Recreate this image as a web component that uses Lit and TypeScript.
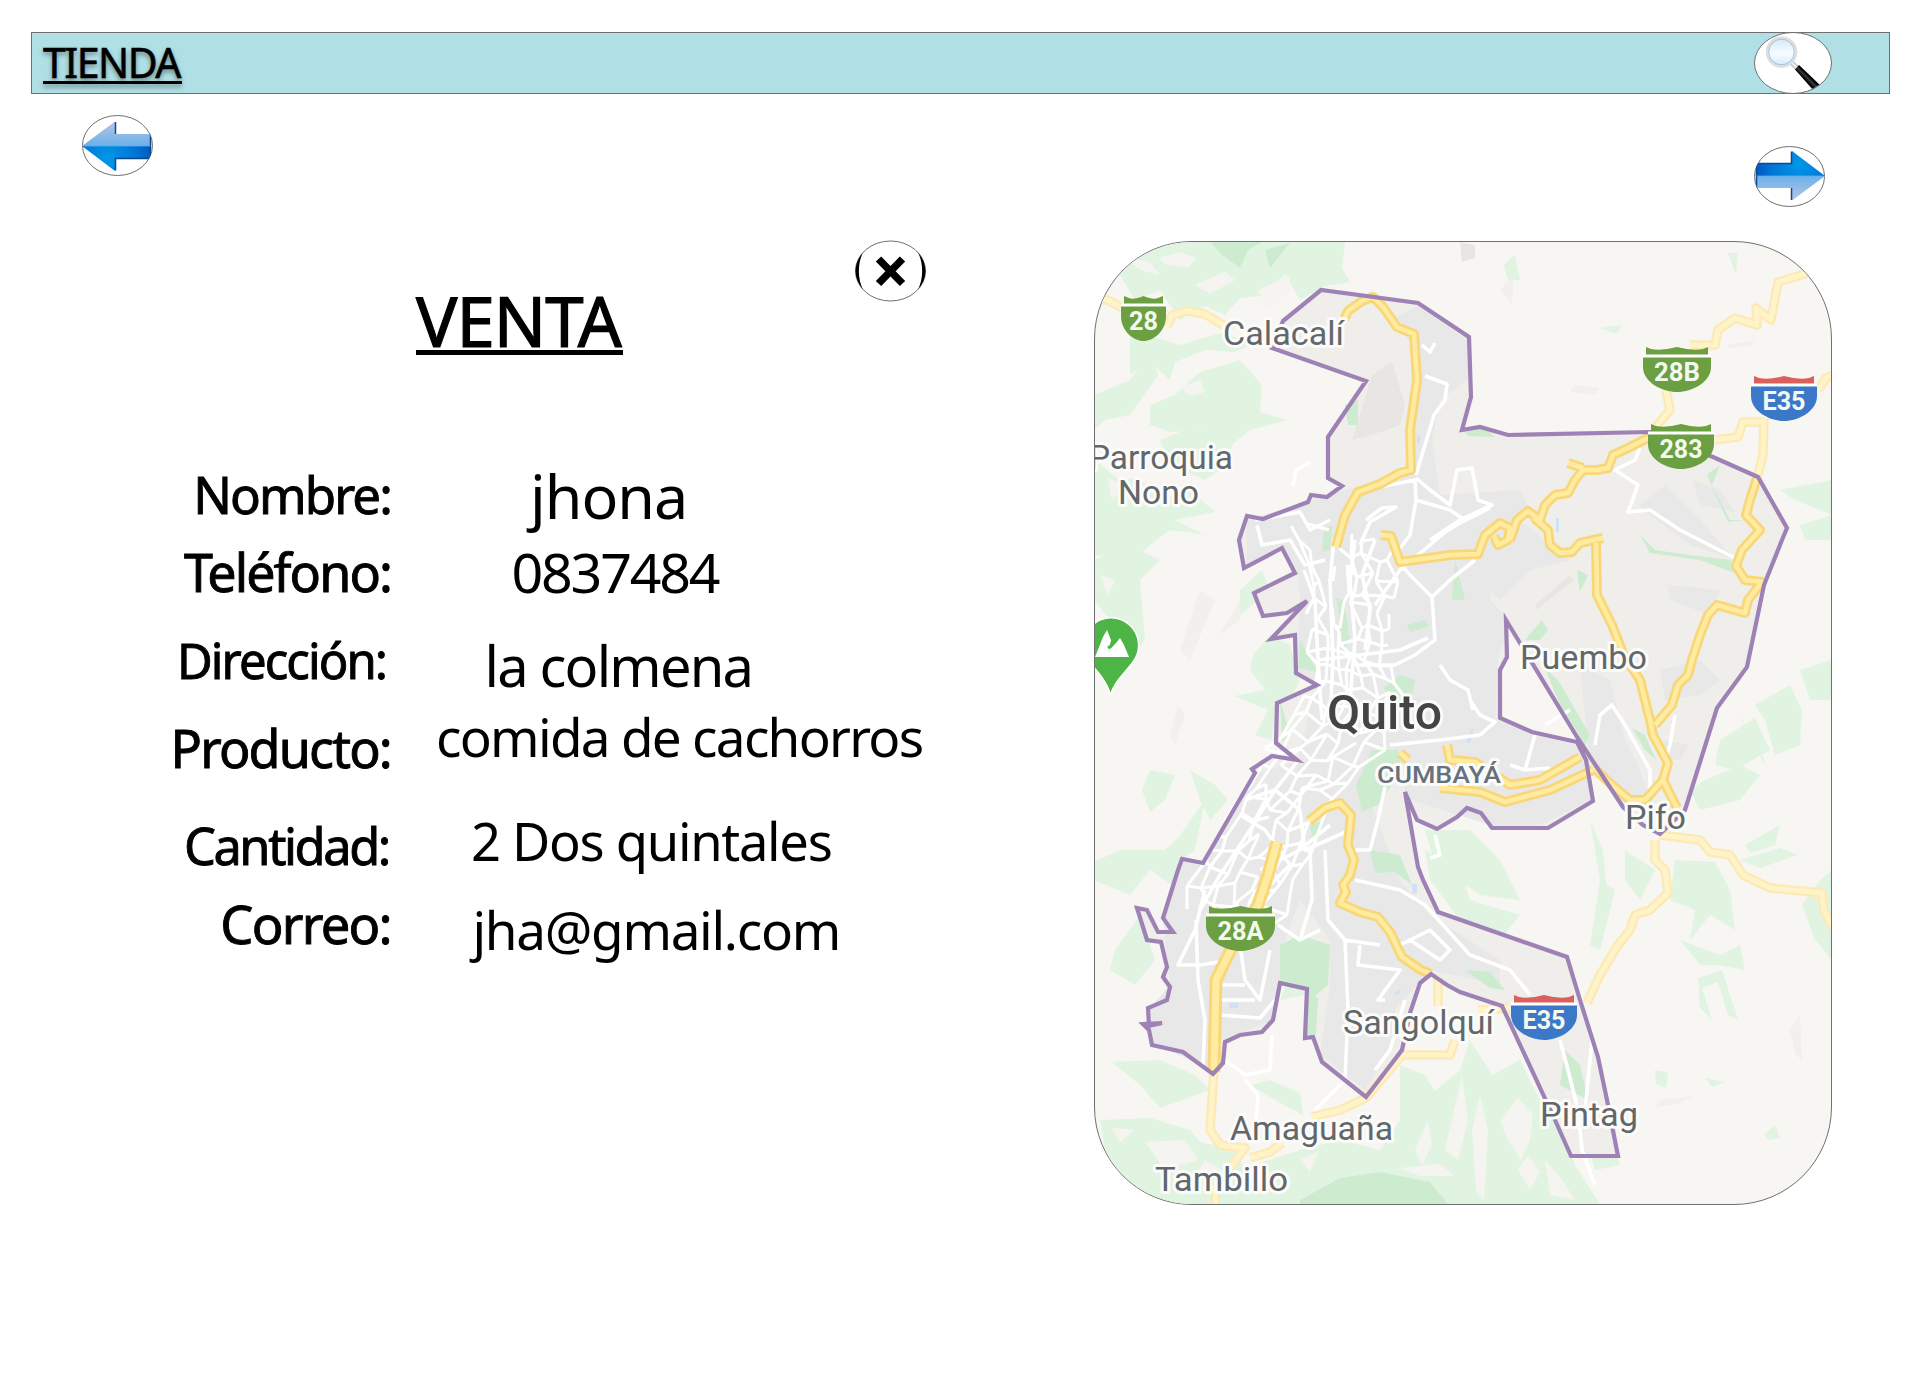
import { LitElement, html, svg, css } from "lit";
import { customElement } from "lit/decorators.js";

const BOUNDARY =
  "M1283 321 1321 290 1418 303 1469 337 1471 397 1462 430 1480 427 1508 435 1650 432 1713 457 1758 477 1787 528 1782 540 1764 585 1747 667 1717 708 1685 810 1660 834 1643 825 1623 807 1577 737 1506 620 1507 657 1500 670 1500 718 1532 732 1577 742 1586 760 1593 801 1548 828 1492 828 1481 813 1467 808 1457 817 1437 829 1417 820 1405 792 1418 867 1423 880 1438 912 1567 957 1580 1000 1598 1057 1607 1100 1618 1156 1571 1156 1555 1120 1502 1006 1460 992 1447 985 1431 974 1420 983 1410 1013 1402 1050 1366 1097 1322 1062 1313 1037 1305 1038 1307 989 1280 983 1273 1020 1262 1032 1240 1035 1225 1042 1223 1063 1213 1074 1183 1052 1152 1045 1149 1030 1143 1024 1162 1023 1149 1026 1148 1008 1167 1000 1170 987 1163 977 1167 967 1161 942 1147 940 1137 908 1147 910 1158 932 1173 932 1163 918 1178 870 1182 859 1203 863 1255 773 1252 769 1272 756 1297 760 1276 743 1277 703 1317 685 1296 673 1295 635 1271 639 1307 601 1287 613 1263 616 1254 593 1295 573 1282 548 1244 568 1239 540 1247 516 1263 519 1308 502 1311 495 1327 497 1342 486 1328 478 1328 437 1366 381 1272 348Z";

const GREEN_LIGHT = [
  "1094 242 1345 242 1342 268 1350 282 1325 286 1300 300 1285 275 1260 296 1240 298 1225 315 1205 306 1180 320 1160 290 1135 300 1120 275 1094 300",
  "1130 330 1180 345 1225 332 1250 345 1235 352 1205 350 1175 362 1170 380 1150 362 1130 375",
  "1094 395 1130 380 1150 352 1158 375 1130 415 1105 420 1094 430",
  "1150 405 1175 395 1200 372 1240 360 1262 385 1260 412 1288 420 1250 430 1225 450 1200 430 1170 432 1150 425",
  "1094 460 1120 480 1140 478 1160 500 1190 490 1215 512 1175 520 1205 535 1216 536 1170 530 1150 545 1135 560 1094 555",
  "1094 560 1130 545 1160 560 1140 580 1145 640 1130 660 1110 620 1094 600",
  "1160 440 1190 428 1235 440 1220 470 1205 480 1170 465",
  "1094 862 1120 850 1165 850 1178 838 1205 800 1195 850 1178 862 1172 885 1150 870 1130 895 1094 880",
  "1150 770 1175 775 1165 800 1150 812 1142 790",
  "1190 770 1215 785 1228 800 1210 820 1200 800",
  "1115 950 1140 915 1155 960 1135 985 1110 970",
  "1112 1062 1160 1060 1195 1075 1210 1090 1160 1108 1140 1085",
  "1100 1120 1150 1118 1190 1130 1200 1142 1235 1150 1245 1168 1300 1150 1340 1140 1380 1150 1400 1120 1460 1070 1470 1040 1492 1075 1520 1060 1540 1100 1560 1125 1575 1165 1600 1204 1130 1204 1105 1150",
  "1250 1085 1270 1080 1300 1093 1303 1115 1280 1103",
  "1400 1065 1425 1075 1440 1100 1430 1130 1400 1130",
  "1280 1000 1305 995 1303 1035 1318 1045 1312 1010 1305 975 1290 975",
  "1253 655 1270 635 1290 645 1300 680 1290 700 1276 706 1272 740 1255 735 1268 710 1235 696 1265 690 1250 670",
  "1240 590 1262 570 1270 590 1240 615",
  "1425 850 1460 870 1470 900 1520 915 1500 940 1460 920 1430 880",
  "1425 830 1470 830 1500 860 1520 900 1480 895 1435 865",
  "1705 780 1740 765 1760 775 1740 800 1700 810 1690 790",
  "1755 705 1790 685 1802 710 1800 745 1775 755 1765 720",
  "1720 740 1755 718 1770 750 1735 770 1715 765",
  "1800 670 1832 660 1832 700 1810 700",
  "1740 860 1780 848 1798 855 1760 868",
  "1745 845 1780 825 1775 845 1750 853",
  "1625 850 1655 870 1640 900 1625 880",
  "1675 860 1715 862 1730 890 1735 930 1710 915 1690 940 1695 910 1670 900",
  "1680 940 1720 955 1740 945 1745 970 1720 965 1700 965",
  "1802 905 1820 880 1832 870 1832 960 1815 940",
  "1600 880 1615 890 1600 950 1590 945",
  "1780 490 1832 480 1832 515 1795 500",
  "1800 525 1832 515 1832 540 1805 540",
  "1504 265 1515 255 1520 280 1508 280",
  "1600 328 1622 325 1616 334",
  "1728 253 1738 253 1736 275",
  "1580 1120 1610 1125 1620 1165 1595 1170",
  "1655 1070 1668 1072 1666 1088 1656 1084",
  "1764 1135 1775 1125 1780 1138 1768 1140",
  "1705 1078 1724 1082 1712 1087",
  "1698 978 1722 970 1738 1020 1728 1015 1718 982 1702 988 1712 1020 1700 1008",
  "1590 820 1603 850 1608 900 1600 880",
  "1740 715 1762 755 1768 770 1750 740",
];

/** Bare hillsides that break up the wooded areas. */
const CLEARINGS = [
  "1158 258 1180 252 1196 258 1188 268 1165 264",
  "1125 258 1150 262 1160 275 1140 270",
  "1195 285 1225 272 1235 280 1210 294",
  "1258 290 1290 275 1290 292 1268 310",
  "1112 1128 1135 1130 1120 1142",
  "1145 1142 1185 1140 1198 1160 1165 1170",
  "1205 1160 1225 1172 1195 1176",
  "1300 1160 1318 1152 1310 1172",
  "1415 1150 1428 1120 1432 1145 1422 1165",
  "1445 1150 1462 1075 1468 1120 1458 1160",
  "1400 1168 1440 1164 1455 1176 1420 1176",
  "1472 1130 1480 1095 1488 1130 1484 1200 1476 1190",
  "1500 1120 1518 1098 1533 1115 1530 1140 1521 1160 1508 1140",
  "1518 1170 1528 1155 1540 1172 1530 1190",
  "1545 1160 1562 1180 1575 1200 1550 1195",
  "1180 388 1200 380 1205 392 1192 396",
  "1108 478 1125 486 1112 500",
  "1100 575 1115 580 1108 596",
];

const GREEN_MID = [
  "1210 242 1262 242 1248 250 1240 268 1222 255",
  "1265 250 1290 243 1270 268",
  "1280 700 1290 735 1282 742",
  "1384 688 1400 675 1415 680 1412 695 1390 702",
  "1356 785 1372 750 1398 750 1402 770 1378 805 1362 812",
  "1336 598 1344 600 1350 640 1344 650",
  "1300 640 1318 672 1298 668",
  "1280 945 1300 935 1330 945 1328 985 1310 1000 1305 988 1280 982",
  "1306 990 1318 998 1316 1035 1306 1035",
  "1300 1200 1340 1178 1380 1172 1430 1182 1448 1204 1300 1204",
  "1407 625 1425 620 1430 626 1410 632",
  "1345 405 1358 400 1358 425 1348 425",
  "1525 640 1542 620 1548 630 1540 640",
  "1545 668 1558 680 1590 735 1585 745 1560 705",
  "1577 570 1588 575 1580 592",
  "1632 728 1645 735 1656 760 1645 750",
  "1707 475 1720 465 1712 485 1730 520 1745 520 1728 522",
  "1640 535 1655 550 1690 555 1730 560 1740 575 1700 560 1650 553",
  "1465 970 1490 972 1505 990 1490 988",
  "1565 1050 1580 1065 1588 1100 1560 1085",
  "1310 825 1325 820 1320 835 1312 837",
  "1370 850 1400 855 1412 885 1395 872 1375 873",
  "1455 560 1465 600 1452 600",
  "1324 530 1332 525 1330 550 1322 552",
  "1462 428 1480 425 1495 437 1468 436",
];

const SHADE = [
  "1372 375 1392 362 1405 405 1400 425 1372 435 1352 440",
  "1535 605 1570 575 1574 580 1536 610",
  "1460 242 1475 245 1475 258 1462 262",
];

const FAINT = [
  "1225 625 1240 600 1240 620 1220 635",
  "1170 735 1178 705 1185 715 1175 745",
  "1575 385 1600 388 1595 395 1570 392",
  "1535 440 1545 438 1545 450 1530 460",
  "1500 290 1514 275 1512 305",
  "1790 1030 1800 1015 1802 1060 1796 1055",
  "1660 1100 1695 1096 1680 1103 1655 1108",
  "1200 590 1215 600 1190 660 1180 650",
  "1725 345 1755 340 1750 346 1730 348",
];

const URBAN = [
  "1395 318 1418 305 1467 340 1468 380 1440 400 1432 440 1440 495 1520 490 1530 510 1500 540 1490 600 1510 620 1498 660 1495 720 1590 750 1592 800 1540 825 1490 825 1410 800 1390 760 1370 800 1400 880 1430 915 1500 960 1500 985 1430 970 1395 1010 1390 1050 1365 1090 1320 1055 1330 985 1330 940 1300 900 1285 940 1275 1020 1220 1040 1213 1070 1150 1042 1150 1008 1170 985 1163 915 1182 862 1203 866 1255 773 1297 762 1315 690 1297 670 1300 600 1297 570 1282 548 1247 565 1247 520 1330 495 1352 488 1400 480 1415 430 1415 350",
  "1580 665 1610 680 1625 740 1640 770 1650 800 1630 800 1590 765",
  "1640 505 1665 485 1700 520 1735 560 1690 545 1650 515",
  "1668 585 1720 590 1710 615 1670 600",
  "1660 670 1700 660 1720 680 1700 695 1665 700",
  "1470 540 1520 520 1570 560 1530 570 1500 600 1460 560",
  "1660 740 1690 745 1680 760 1662 760",
  "1692 480 1720 490 1735 512 1700 505",
];

const STREETS = [
  "1425 376 1447 384 1445 400 1434 415 1425 445 1416 475",
  "1416 478 1430 490 1450 505 1457 470 1472 468 1478 500 1492 505 1460 520 1430 540",
  "1380 487 1415 480 1416 500 1410 535 1395 555",
  "1366 520 1382 508 1396 507 1370 522 1360 545",
  "1416 500 1450 510 1465 520 1440 535",
  "1490 508 1450 528 1430 545 1400 570 1375 605",
  "1475 560 1450 580 1432 597 1410 575 1402 566",
  "1432 597 1435 640 1415 655 1395 665 1355 665",
  "1304 570 1315 600 1318 660 1322 720",
  "1334 540 1330 580 1333 660 1330 720",
  "1355 540 1350 580 1355 640 1350 700",
  "1375 540 1362 575 1370 610 1365 650",
  "1440 665 1450 680 1468 690 1473 710",
  "1318 660 1360 655 1400 650 1428 638",
  "1255 520 1300 512 1310 530 1330 520",
  "1257 525 1262 545 1290 540 1305 565 1325 560",
  "1470 700 1480 715 1495 722 1480 735 1440 740 1390 745",
  "1535 735 1525 770 1550 768 M1525 770 1510 765",
  "1545 725 1570 710",
  "1595 745 1600 715 1612 705 1625 725 1650 770 1650 790",
  "1675 715 1670 745 1665 760",
  "1640 448 1635 460 1615 470 1638 485 1628 512 1650 510 1680 530 1735 558",
  "1297 762 1275 790 1250 830 1220 875 1200 910",
  "1245 800 1275 790 1300 810 1305 850 1350 830",
  "1240 815 1265 830 1290 865 1270 885",
  "1260 870 1300 850 1330 825",
  "1310 850 1312 900 1300 940 1278 925",
  "1325 850 1328 920 1345 940 1380 945",
  "1385 787 1378 820 1370 850 1355 850",
  "1205 890 1195 930 1178 965 1200 965 1230 960",
  "1196 920 1198 980 1205 1020 1203 1065",
  "1220 1015 1260 1018 1275 1000",
  "1240 945 1245 980 1260 1000 1270 950",
  "1220 985 1245 985 M1220 1000 1255 1000",
  "1345 940 1348 1010 1345 1080 1315 1110",
  "1360 945 1358 965 1400 970 1378 1000 1385 1000",
  "1355 880 1400 890 1425 905 1470 955 1510 970 1530 995",
  "1400 945 1430 930 1450 950 1440 960 1410 940",
  "1405 1000 1390 1050 1375 1070",
  "1225 1060 1245 1075 1270 1070 1272 1035",
  "1245 1080 1258 1095 1256 1120",
  "1278 925 1300 940 1320 930",
  "1560 1040 1568 1070 1578 1110 1582 1150 1595 1185",
  "1592 1040 1588 1080 1585 1110",
  "1435 835 1440 855 1430 858",
  "1422 345 1430 352 1435 343",
  "1293 486 1296 470 1310 462",
];

const ROADS_PALE = [
  "1094 299 1108 300 1122 308",
  "1167 327 1172 315 1187 311 1205 314 1218 322 1232 330",
  "1690 345 1715 345 1718 330 1735 318 1757 325 1756 308 1771 320 1778 282 1795 277 1810 272 1825 278",
  "1666 390 1670 410 1655 428",
  "1715 440 1738 437 1743 422 1765 422",
  "1764 418 1763 455 1757 478",
  "1818 390 1826 378 1834 375",
  "1438 978 1438 1006",
  "1214 1070 1210 1130 1220 1145 1245 1148 1230 1168",
  "1216 1180 1215 1206",
  "1312 1117 1340 1110 1366 1098 1402 1055 1450 1055 1455 1040",
  "1250 1158 1270 1152 1282 1143",
  "1587 1003 1600 975 1618 945 1630 930 1635 915 1650 910 1668 893 1665 870 1655 860 1655 840",
  "1660 835 1700 840 1710 852 1730 855 1743 875 1770 888 1822 893 1824 910 1833 928",
  "1478 1010 1510 1008",
];

const ROADS = [
  "1344 320 1348 311 1362 301 1373 297 1383 307 1397 327 1414 334 1417 380 1410 430 1411 470 1400 473 1380 484 1358 492 1345 515 1336 547",
  "1381 535 1391 536 1400 562 1450 555 1478 554 1485 535 1500 523 1510 528 1508 540 1498 545 1494 536 M1510 540 1517 520 1528 511 1540 520 1545 505 1555 495 1568 493 1575 480 1583 470 1597 470 1608 468 1613 455 1628 448 1650 437",
  "1583 468 1568 463",
  "1534 518 1548 530 1550 545 1560 553 1572 552 1580 543 1603 538",
  "1596 543 1597 595 1612 625 1625 658 1640 680 1650 720 1653 735 1668 763 1663 780 1645 800 1630 800 1612 785 1592 766",
  "1663 780 1677 808",
  "1757 478 1750 500 1746 515 1760 530 1742 550 1736 566 1745 580 1762 582 1748 600 1745 613 1717 605 1708 615 1700 635 1692 660 1688 675 1678 685 1672 705 1655 725",
  "1447 745 1450 760 1475 762 1510 785 1540 780 1580 757",
  "1440 788 1480 792 1505 802 1550 790 1593 770",
  "1400 753 1408 760",
  "1309 821 1325 808 1340 803 1351 815 1348 845 1354 860 1350 875 1343 885 1346 892 1340 903 1360 912 1378 917 1390 932 1402 957 1421 970 1431 974",
];

const ROAD_THICK = ["1277 842 1268 875 1258 905 1233 945 1216 980 1214 1072"];

interface Place {
  t: string;
  x: number;
  y: number;
  w: number;
  kind?: string;
}
const PLACES: Place[] = [
  { t: "Calacalí", x: 1223, y: 345, w: 121 },
  { t: "Parroquia", x: 1089, y: 469, w: 144 },
  { t: "Nono", x: 1118, y: 504, w: 81 },
  { t: "Quito", x: 1327, y: 729, w: 115, kind: "city" },
  { t: "CUMBAYÁ", x: 1377, y: 782.5, w: 124, kind: "suburb" },
  { t: "Puembo", x: 1520, y: 669, w: 127 },
  { t: "Pifo", x: 1625, y: 829, w: 61 },
  { t: "Sangolquí", x: 1343, y: 1033.5, w: 151 },
  { t: "Amaguaña", x: 1230, y: 1139.5, w: 163 },
  { t: "Tambillo", x: 1155, y: 1191, w: 133 },
  { t: "Pintag", x: 1540, y: 1126, w: 98 },
];

interface Shield {
  t: string;
  x: number;
  y: number;
  w: number;
  tw: number;
  blue?: boolean;
}
const SHIELDS: Shield[] = [
  { t: "28", x: 1121, y: 296, w: 45, tw: 29 },
  { t: "28B", x: 1643, y: 347, w: 68, tw: 46 },
  { t: "283", x: 1648, y: 424, w: 66, tw: 43 },
  { t: "28A", x: 1206, y: 906, w: 69, tw: 46 },
  { t: "E35", x: 1751, y: 376, w: 66, tw: 43, blue: true },
  { t: "E35", x: 1511, y: 995, w: 66, tw: 43, blue: true },
];

/** Fine neighbourhood streets following the north-south axis of the city. */
function streetMesh(): string {
  const spine: [number, number, number][] = [
    [1345, 535, 48], [1350, 590, 42], [1350, 640, 38], [1358, 690, 46],
    [1330, 740, 50], [1290, 790, 42], [1265, 840, 48], [1240, 890, 48], [1225, 935, 44],
  ];
  let seed = 11;
  const rnd = () => ((seed = (seed * 16807) % 2147483647) / 2147483647);
  const cols = 8;
  const rows: [number, number][][] = [];
  for (let i = 0; i < spine.length - 1; i++) {
    for (let k = 0; k < 3; k++) {
      const f = k / 3;
      const [a, b] = [spine[i], spine[i + 1]];
      const cx = a[0] + (b[0] - a[0]) * f;
      const cy = a[1] + (b[1] - a[1]) * f;
      const hw = a[2] + (b[2] - a[2]) * f;
      const row: [number, number][] = [];
      for (let c = 0; c < cols; c++) {
        const u = c / (cols - 1) - 0.5;
        row.push([Math.round(cx + u * 2 * hw + (rnd() - 0.5) * 12), Math.round(cy + u * 16 + (rnd() - 0.5) * 12)]);
      }
      rows.push(row);
    }
  }
  let d = "";
  rows.forEach((row, r) =>
    row.forEach((p, c) => {
      const core = r > 8 && r < 16 ? 0.25 : 0;
      if (c < cols - 1 && rnd() < 0.6 + core) d += `M${p.join(" ")} ${row[c + 1].join(" ")}`;
      if (r < rows.length - 1 && rnd() < 0.85) d += `M${p.join(" ")} ${rows[r + 1][c].join(" ")}`;
    }),
  );
  return d;
}
const MESH = streetMesh();

@customElement("city-map")
class CityMap extends LitElement {
  static styles = css`
    :host {
      display: block;
      box-sizing: border-box;
      width: 738px;
      height: 964px;
      border: 1px solid #707070;
      border-radius: 98px;
      overflow: hidden;
      background: #f7f6f2;
    }
    svg { display: block; width: 736px; height: 962px; }
    .light { fill: #e1f4e2; }
    .mid { fill: #cdebcf; }
    .clear { fill: #f5f4f0; }
    .shade { fill: #e7e6e2; }
    .faint { fill: #f1f0ed; }
    .inner { fill: #efeeea; }
    .urban { fill: #e8e8e8; }
    .line { fill: none; stroke-linejoin: round; stroke-linecap: butt; }
    .street { stroke: #fff; stroke-width: 3.6; }
    .mesh { stroke: #fff; stroke-width: 3; }
    .pale-case { stroke: #fde9b4; stroke-width: 9.5; }
    .pale { stroke: #fff4c9; stroke-width: 5; }
    .case { stroke: #f9d778; stroke-width: 10; }
    .road { stroke: #ffeca0; stroke-width: 4.5; }
    .thick-case { stroke: #f9d778; stroke-width: 13; }
    .thick { stroke: #ffeca0; stroke-width: 7; }
    .border { stroke: #9f82b5; stroke-width: 4.2; stroke-linejoin: miter; }
    .water { fill: #cfe2f5; }
    text {
      font-family: Roboto, "Liberation Sans", sans-serif;
      font-size: 33px;
      fill: #62676b;
      stroke: #fbfbf9;
      stroke-width: 6px;
      stroke-linejoin: round;
      paint-order: stroke;
    }
    .city { font-size: 48px; font-weight: 500; fill: #444; }
    .suburb { font-size: 24px; font-weight: 500; fill: #66717e; }
    .num { font-size: 25px; font-weight: 700; fill: #f4f9f0; stroke: none; }
  `;

  private lines(list: string[], cls: string) {
    return svg`<path class="line ${cls}" d=${list.map((p) => "M" + p).join("")}></path>`;
  }

  private areas(list: string[], cls: string) {
    return svg`<path class=${cls} d=${list.map((p) => "M" + p + "Z").join("")}></path>`;
  }

  private shield(s: Shield) {
    const { x, y, w } = s;
    const c = x + w / 2;
    const r = x + w;
    return svg`
      <path fill=${s.blue ? "#d9605d" : "#6b9f41"}
        d="M${x + 3} ${y}L${x + 8} ${y + 2}Q${x + w * 0.28} ${y + 4} ${c} ${y}Q${r - w * 0.28} ${y + 4} ${r - 8} ${y + 2}L${r - 3} ${y}V${y + 8}H${x + 3}Z"></path>
      <rect x=${x} y=${y + 7.5} width=${w} height="3.5" fill="#fff"></rect>
      <path fill=${s.blue ? "#3b78c8" : "#6b9f41"}
        d="M${x} ${y + 10.5}H${r}V${y + 20}C${r} ${y + 35} ${c + w * 0.22} ${y + 45} ${c} ${y + 45}C${c - w * 0.22} ${y + 45} ${x} ${y + 35} ${x} ${y + 20}Z"></path>
      <text class="num" x=${c - s.tw / 2} y=${y + 33.5} textLength=${s.tw} lengthAdjust="spacingAndGlyphs">${s.t}</text>`;
  }

  render() {
    return html`<svg viewBox="1095 242 736 962">
      ${this.areas(FAINT, "faint")} ${this.areas(GREEN_LIGHT, "light")} ${this.areas(CLEARINGS, "clear")}
      <path class="inner" d=${BOUNDARY}></path>
      ${this.areas(URBAN, "urban")} ${this.areas(SHADE, "shade")} ${this.areas(GREEN_MID, "mid")}
      <path class="water" d="M1417 435h3v8h-3ZM1466 742l6 -14 2 2 -4 13ZM1229 1003h9v5h-9ZM1412 884h5v10h-5ZM1394 994l5 -5 2 2 -4 5ZM1556 518h3v14h-3Z"></path>
      <path class="line mesh" d=${MESH}></path>
      ${this.lines(STREETS, "street")}
      ${this.lines(ROADS_PALE, "pale-case")} ${this.lines(ROADS_PALE, "pale")}
      ${this.lines(ROADS, "case")} ${this.lines(ROAD_THICK, "thick-case")}
      ${this.lines(ROADS, "road")} ${this.lines(ROAD_THICK, "thick")}
      <path class="line border" d=${BOUNDARY}></path>
      <path fill="#4db446" stroke="#fff" stroke-width="1.5"
        d="M1110.500 695C1107 682 1098 672 1090 663A27.500 27.500 0 1 1 1133 662C1124 674 1114 682 1110.500 695Z"></path>
      <path fill="#fff" d="M1095 657L1103 637 1107 630 1111 640 1110 649 1116 643 1120 638 1124 645 1129 657Z"></path>
      <path fill="none" stroke="#4db446" stroke-width="3" d="M1108 648l3 -2 3 -8"></path>
      ${SHIELDS.map((s) => this.shield(s))}
      ${PLACES.map(
        (p) => svg`<text class=${p.kind ?? "town"} x=${p.x} y=${p.y} textLength=${p.w} lengthAdjust="spacingAndGlyphs">${p.t}</text>`,
      )}
    </svg>`;
  }
}

@customElement("arrow-icon")
class ArrowIcon extends LitElement {
  static styles = css`
    :host { display: block; width: 71px; height: 61px; }
    :host([forward]) svg { transform: rotate(180deg); }
    svg { display: block; }
  `;
  render() {
    return html`<svg width="71" height="61" viewBox="0 0 71 61">
      <defs>
        <linearGradient id="top" x1="0" y1="0" x2="0" y2="1">
          <stop offset="0" stop-color="#b4c6e6"></stop>
          <stop offset="1" stop-color="#6cb0e9"></stop>
        </linearGradient>
        <radialGradient id="low" gradientUnits="userSpaceOnUse" cx="26" cy="43" r="48">
          <stop offset="0" stop-color="#0098e8"></stop>
          <stop offset="0.6" stop-color="#0074d6"></stop>
          <stop offset="1" stop-color="#0052b4"></stop>
        </radialGradient>
        <clipPath id="oval"><ellipse cx="35.500" cy="30.500" rx="35" ry="30"></ellipse></clipPath>
      </defs>
      <ellipse cx="35.500" cy="30.500" rx="35" ry="30" fill="#fff" stroke="#707070"></ellipse>
      <g clip-path="url(#oval)">
        <path fill="url(#top)" d="M0 31L33 6.500V19H69V31Z"></path>
        <path fill="url(#low)" d="M0 31H69V43.500H33V56Z"></path>
        <path fill="none" stroke="#0b4a8c" stroke-width="1.500" d="M33.500 7V19M68.500 19V43.500H33.500V55.500"></path>
        <path stroke="#5cb0f0" stroke-width="0.800" d="M2 31H68"></path>
      </g>
    </svg>`;
  }
}

@customElement("app-root")
class AppRoot extends LitElement {
  static styles = css`
    :host {
      display: block;
      box-sizing: border-box;
      width: 1920px;
      height: 1396px;
      padding: 32px 30px 0 31px;
      background: #fff;
      color: #000;
      font-family: "Noto Sans", "Open Sans", sans-serif;
      overflow: hidden;
    }
    .bar {
      box-sizing: border-box;
      display: flex;
      align-items: flex-start;
      justify-content: space-between;
      height: 62px;
      border: 1px solid #707070;
      background: #b0e0e6;
      padding: 0 57px 0 11px;
    }
    .search { display: block; margin-top: -1px; }
    .brand, .title {
      margin: 0;
      font-weight: 400;
      white-space: nowrap;
      width: max-content;
    }
    .brand {
      font-size: 41px;
      line-height: 56px;
      letter-spacing: -1.5px;
      text-shadow: 0 3px 5px rgba(0, 0, 0, 0.45);
      -webkit-text-stroke: 0.6px #000;
      margin-top: 0.5px;
    }
    .brand span, .title span { display: block; }
    .brand .rule { height: 3px; width: 139px; margin-top: -9px; background: #000; box-shadow: 0 3px 5px rgba(0, 0, 0, 0.4); }
    .nav {
      display: flex;
      justify-content: space-between;
      padding: 21px 65px 0 51px;
      height: 126px;
    }
    .nav .next { margin-top: 31px; }
    .main { display: flex; justify-content: space-between; width: 1801px; }
    .sale { width: 900px; }
    .head { display: flex; justify-content: space-between; padding: 0 5px 0 385px; height: 218px; }
    .head svg { margin-top: -1px; }
    .title {
      font-size: 69px;
      line-height: 94px;
      letter-spacing: -1px;
      -webkit-text-stroke: 1.2px #000;
      margin-top: 31.5px;
    }
    .title .rule { height: 5px; width: 207px; margin-top: -16.5px; background: #000; }
    .fields { display: flex; gap: 45px; }
    .labels, .values { display: flex; flex-direction: column; white-space: nowrap; line-height: 70px; }
    .labels { width: 360px; align-items: flex-end; -webkit-text-stroke: 0.9px #000; letter-spacing: -1.9px; }
    .l0 { font-size: 51px; }
    .l1 { font-size: 52px; margin-top: 7.900px; }
    .l2 { font-size: 49px; margin: 18.100px 5px 0 0; }
    .l3 { font-size: 52px; margin-top: 17.600px; letter-spacing: -1.8px; }
    .l4 { font-size: 50.500px; margin: 28.200px 2px 0 0; letter-spacing: -2.400px; }
    .l5 { font-size: 52.500px; margin-top: 7.900px; letter-spacing: -1.700px; }
    .v0 { font-size: 61px; padding-left: 94px; margin-top: 2px; letter-spacing: -1px; }
    .v1 { font-size: 55.500px; padding-left: 75.500px; margin-top: 6px; letter-spacing: -2.200px; }
    .v2 { font-size: 56px; padding-left: 48.500px; margin-top: 23.200px; letter-spacing: -1.800px; }
    .v3 { font-size: 53px; margin-top: 1.700px; letter-spacing: -1.700px; }
    .v4 { font-size: 52.500px; padding-left: 35px; margin-top: 34.500px; letter-spacing: -1.300px; }
    .v5 { font-size: 53px; padding-left: 36.500px; margin-top: 18.800px; letter-spacing: -1.300px; }
  `;

  private fields: [string, string][] = [
    ["Nombre:", "jhona"],
    ["Teléfono:", "0837484"],
    ["Dirección:", "la colmena"],
    ["Producto:", "comida de cachorros"],
    ["Cantidad:", "2 Dos quintales"],
    ["Correo:", "jha@gmail.com"],
  ];

  render() {
    return html`
      <header class="bar">
        <h1 class="brand"><span>TIENDA</span><span class="rule"></span></h1>
        <svg class="search" width="78" height="62" viewBox="0 0 78 62">
          <defs>
            <linearGradient id="glass" x1="0" y1="0" x2="0" y2="1">
              <stop offset="0" stop-color="#cfe6f8"></stop>
              <stop offset="0.550" stop-color="#f8fcff"></stop>
              <stop offset="1" stop-color="#d3e9fa"></stop>
            </linearGradient>
            <linearGradient id="grip" gradientUnits="userSpaceOnUse" x1="50" y1="49" x2="56" y2="43">
              <stop offset="0.200" stop-color="#000"></stop>
              <stop offset="0.550" stop-color="#3c3c3c"></stop>
              <stop offset="0.800" stop-color="#000"></stop>
            </linearGradient>
            <clipPath id="lens"><ellipse cx="39" cy="31" rx="38" ry="30"></ellipse></clipPath>
          </defs>
          <ellipse cx="39" cy="31" rx="38.500" ry="30.500" fill="#fff" stroke="#707070"></ellipse>
          <g clip-path="url(#lens)">
            <path d="M37 30L44 37" stroke="#c4c4c4" stroke-width="5"></path>
            <path d="M37 30L44 37" stroke="#f4f4f4" stroke-width="2"></path>
            <path d="M41 37.500L45 33 67 54 60 59Z" fill="url(#grip)"></path>
            <circle cx="27.500" cy="20" r="14.500" fill="url(#glass)" stroke="#dcdedf" stroke-width="2.500"></circle>
            <circle cx="27.500" cy="20" r="12.800" fill="none" stroke="#9fc0d8" stroke-width="1"></circle>
          </g>
        </svg>
      </header>
      <nav class="nav">
        <arrow-icon></arrow-icon>
        <arrow-icon class="next" forward></arrow-icon>
      </nav>
      <div class="main">
        <section class="sale">
          <div class="head">
            <h2 class="title"><span>VENTA</span><span class="rule"></span></h2>
            <svg width="71" height="62" viewBox="0 0 71 62">
              <ellipse cx="35.500" cy="31" rx="35" ry="30" fill="#fff" stroke="#707070"></ellipse>
              <path d="M8 12.500C-2 24 -2 38 8 49.500C2.500 39 2.500 23 8 12.500ZM63 12.500C73 24 73 38 63 49.500C68.500 39 68.500 23 63 12.500Z"></path>
              <path d="M23.500 19L47.500 43.500M47.500 19L23.500 43.500" stroke="#000" stroke-width="7.500"></path>
            </svg>
          </div>
          <div class="fields">
            <div class="labels">${this.fields.map((f, i) => html`<span class="l${i}">${f[0]}</span>`)}</div>
            <div class="values">${this.fields.map((f, i) => html`<span class="v${i}">${f[1]}</span>`)}</div>
          </div>
        </section>
        <city-map></city-map>
      </div>
    `;
  }
}
